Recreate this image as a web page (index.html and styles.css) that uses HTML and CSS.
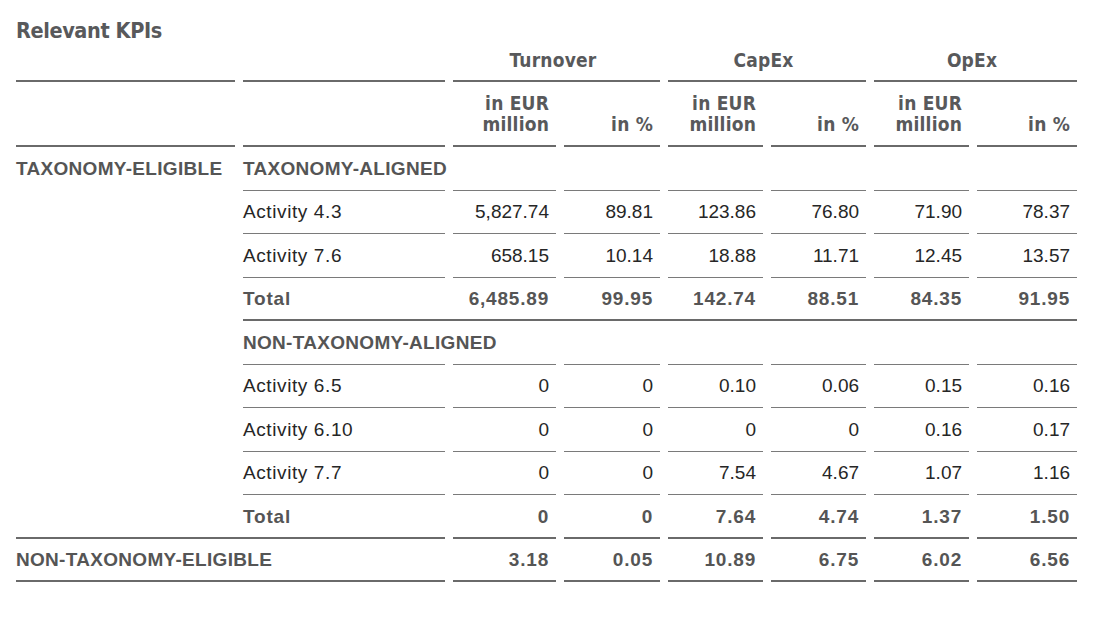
FILE: index.html
```html
<!DOCTYPE html>
<html lang="en">
<head>
<meta charset="utf-8">
<title>Relevant KPIs</title>
<link rel="stylesheet" href="styles.css">
</head>
<body>
<div class="report">
  <h1 class="title">Relevant KPIs</h1>
  <table class="kpi">
    <colgroup>
      <col class="c1"><col class="c2"><col class="c3"><col class="c4">
      <col class="c5"><col class="c6"><col class="c7"><col class="c8">
    </colgroup>
    <thead>
      <tr class="hd1">
        <th class="col1 thick"></th>
        <th class="thick"></th>
        <th class="thick grp" colspan="2">Turnover</th>
        <th class="thick grp" colspan="2">CapEx</th>
        <th class="thick grp" colspan="2">OpEx</th>
      </tr>
      <tr class="hd2">
        <th class="col1 thick"></th>
        <th class="thick"></th>
        <th class="thick unit">in EUR<br>million</th>
        <th class="thick unit">in %</th>
        <th class="thick unit">in EUR<br>million</th>
        <th class="thick unit">in %</th>
        <th class="thick unit">in EUR<br>million</th>
        <th class="thick unit">in %</th>
      </tr>
    </thead>
    <tbody>
      <tr>
        <td class="col1 sec lab-b thick full" rowspan="9">TAXONOMY-ELIGIBLE</td>
        <td class="lab-b thin">TAXONOMY-ALIGNED</td>
        <td class="thin"></td><td class="thin"></td><td class="thin"></td>
        <td class="thin"></td><td class="thin"></td><td class="thin"></td>
      </tr>
      <tr>
        <td class="lab thin">Activity 4.3</td>
        <td class="num thin">5,827.74</td><td class="num thin">89.81</td>
        <td class="num thin">123.86</td><td class="num thin">76.80</td>
        <td class="num thin">71.90</td><td class="num thin">78.37</td>
      </tr>
      <tr>
        <td class="lab thin">Activity 7.6</td>
        <td class="num thin">658.15</td><td class="num thin">10.14</td>
        <td class="num thin">18.88</td><td class="num thin">11.71</td>
        <td class="num thin">12.45</td><td class="num thin">13.57</td>
      </tr>
      <tr>
        <td class="tot thick">Total</td>
        <td class="num-b thick full">6,485.89</td><td class="num-b thick full">99.95</td>
        <td class="num-b thick full">142.74</td><td class="num-b thick full">88.51</td>
        <td class="num-b thick full">84.35</td><td class="num-b thick full">91.95</td>
      </tr>
      <tr>
        <td class="lab-b thin">NON-TAXONOMY-ALIGNED</td>
        <td class="thin"></td><td class="thin"></td><td class="thin"></td>
        <td class="thin"></td><td class="thin"></td><td class="thin"></td>
      </tr>
      <tr>
        <td class="lab thin">Activity 6.5</td>
        <td class="num thin">0</td><td class="num thin">0</td>
        <td class="num thin">0.10</td><td class="num thin">0.06</td>
        <td class="num thin">0.15</td><td class="num thin">0.16</td>
      </tr>
      <tr>
        <td class="lab thin">Activity 6.10</td>
        <td class="num thin">0</td><td class="num thin">0</td>
        <td class="num thin">0</td><td class="num thin">0</td>
        <td class="num thin">0.16</td><td class="num thin">0.17</td>
      </tr>
      <tr>
        <td class="lab thin">Activity 7.7</td>
        <td class="num thin">0</td><td class="num thin">0</td>
        <td class="num thin">7.54</td><td class="num thin">4.67</td>
        <td class="num thin">1.07</td><td class="num thin">1.16</td>
      </tr>
      <tr>
        <td class="tot thick full">Total</td>
        <td class="num-b thick">0</td><td class="num-b thick">0</td>
        <td class="num-b thick">7.64</td><td class="num-b thick">4.74</td>
        <td class="num-b thick">1.37</td><td class="num-b thick">1.50</td>
      </tr>
      <tr>
        <td class="col1 lab-b thick full" colspan="2">NON-TAXONOMY-ELIGIBLE</td>
        <td class="num-b thick">3.18</td><td class="num-b thick">0.05</td>
        <td class="num-b thick">10.89</td><td class="num-b thick">6.75</td>
        <td class="num-b thick">6.02</td><td class="num-b thick">6.56</td>
      </tr>
    </tbody>
  </table>
</div>
</body>
</html>
```

FILE: styles.css
```css
html, body {
  margin: 0;
  padding: 0;
  background: #ffffff;
}

.report {
  padding: 15px 16px 0 16px;
  font-family: "Liberation Sans", Arial, sans-serif;
  color: #333333;
}

.title {
  margin: 0;
  font-family: "Liberation Sans Narrow", "DejaVu Sans Condensed", "Liberation Sans", sans-serif;
  font-stretch: condensed;
  font-weight: 700;
  font-size: 21.5px;
  line-height: 32px;
  color: #58595b;
  letter-spacing: -0.4px;
}

.kpi {
  border-collapse: collapse;
  border-spacing: 0;
  table-layout: fixed;
  width: 1061px;
}

.c1 { width: 219px; }
.c2 { width: 210px; }
.c3 { width: 111px; }
.c4 { width: 104px; }
.c5 { width: 103px; }
.c6 { width: 103px; }
.c7 { width: 103px; }
.c8 { width: 108px; }

.kpi th,
.kpi td {
  --gap: 8px;
  --lw: 0px;
  --lc: #757575;
  padding: 0 7px 0 8px;
  background-image: linear-gradient(var(--lc), var(--lc));
  background-repeat: no-repeat;
  background-position: right bottom;
  background-size: calc(100% - var(--gap)) var(--lw);
  white-space: nowrap;
}

.kpi .thin { --lw: 1px; --lc: #7a7a7a; }
.kpi .thick { --lw: 2px; --lc: #6a6a6a; }
.kpi .full { --gap: 0px; }
.kpi .col1 { --gap: 0px; padding-left: 0; }

/* header */
.kpi thead th {
  font-family: "Liberation Sans Narrow", "DejaVu Sans Condensed", "Liberation Sans", sans-serif;
  font-stretch: condensed;
  font-weight: 700;
  font-size: 19px;
  color: #58595b;
  vertical-align: bottom;
  padding-bottom: 12px;
  letter-spacing: 0.2px;
}

.hd1 { height: 35px; }
.hd1 th { line-height: 20px; }
.hd2 { height: 65px; }
.hd2 th { line-height: 21px; }

.kpi .grp { text-align: center; }
.kpi .unit { text-align: right; }

/* body */
.kpi tbody tr { height: 43.5px; }
.kpi tbody td {
  font-size: 19px;
  line-height: 22px;
  vertical-align: middle;
}

.kpi .sec {
  vertical-align: top;
  line-height: 43px;
}

.lab {
  color: #262626;
  letter-spacing: 0.6px;
}

.lab-b {
  font-weight: 700;
  color: #555555;
  letter-spacing: 0.3px;
}

.tot {
  font-weight: 700;
  color: #555555;
  letter-spacing: 0.8px;
}

.num {
  text-align: right;
  color: #262626;
}

.num-b {
  text-align: right;
  font-weight: 700;
  color: #555555;
  letter-spacing: 0.8px;
}
```
